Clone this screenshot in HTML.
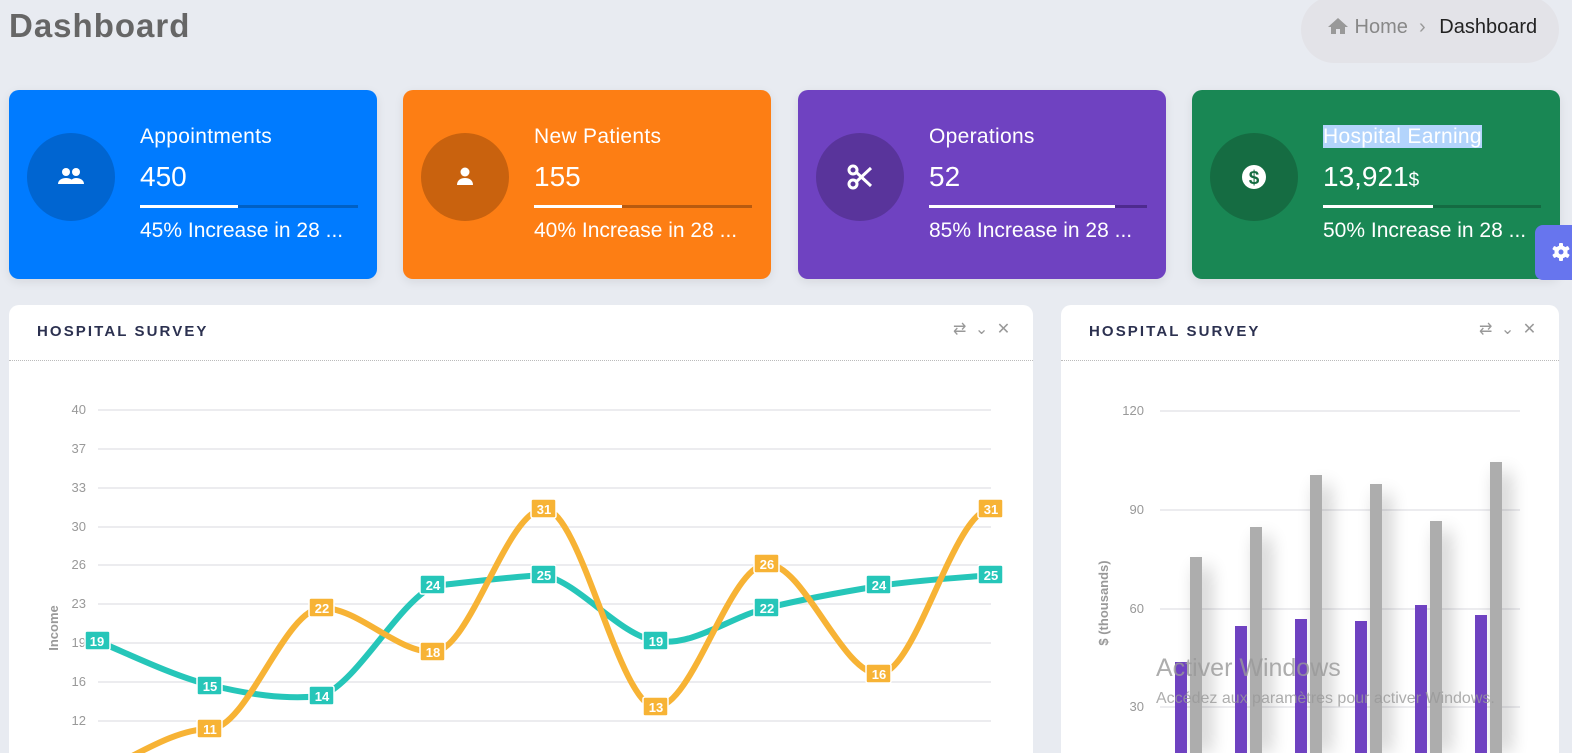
<!DOCTYPE html>
<html><head><meta charset="utf-8"><style>
*{margin:0;padding:0;box-sizing:border-box}
html,body{width:1572px;height:753px;overflow:hidden}
body{background:#e8ebf1;font-family:"Liberation Sans",sans-serif;position:relative}
h1{position:absolute;left:9px;top:7px;font-size:33px;font-weight:bold;color:#666;letter-spacing:1px}
.bc{position:absolute;left:1301px;top:-4px;width:258px;height:67px;border-radius:34px;background:#e3e3e8;font-size:20px;color:#888;padding:20px 0 0 26px;white-space:nowrap}
.bc b{font-weight:normal;color:#222;margin-left:8px}
.card{position:absolute;top:90px;width:368px;height:189px;border-radius:10px;color:#fff;box-shadow:0 3px 10px rgba(0,0,0,.08)}
.circ{position:absolute;left:18px;top:43px;width:88px;height:88px;border-radius:50%;display:flex;align-items:center;justify-content:center}
.t{position:absolute;left:131px;top:35px;font-size:21px;letter-spacing:0.3px;white-space:nowrap}
.v{position:absolute;left:131px;top:71px;font-size:28px}
.bar{position:absolute;left:131px;top:115px;width:218px;height:3px}
.bar i{display:block;height:3px;background:#fff}
.f{position:absolute;left:131px;top:129px;font-size:21px;white-space:nowrap}
.panel{position:absolute;top:305px;height:448px;background:#fff;border-radius:10px 10px 0 0}
.ph{height:56px;border-bottom:1px dotted #bbb;padding:18px 0 0 28px;font-size:15px;font-weight:bold;letter-spacing:2.1px;color:#2c3150}
.tools{position:absolute;top:14px;font-size:16px;color:#999;letter-spacing:2px}
.gear{position:absolute;left:1535px;top:225px;width:37px;height:55px;background:#6775ee;border-radius:8px 0 0 8px}
</style></head><body>
<h1>Dashboard</h1>
<div class="bc"><svg width="22" height="18" viewBox="0 0 22 18" style="vertical-align:-2px"><path d="M11 1 L1 10 H4 V17 H9 V12 H13 V17 H18 V10 H21 Z" fill="#999"/></svg> Home &nbsp;<span style="color:#999">&#8250;</span> <b>Dashboard</b></div>

<div class="card" style="left:9px;background:#007bff"><div class="circ" style="background:#0065d1"><svg width="30" height="22" viewBox="0 0 30 22"><circle cx="10" cy="6" r="4" fill="#fff"/><circle cx="20" cy="6" r="4" fill="#fff"/><path d="M2 18c0-4 4-6 8-6s8 2 8 6zM14 18c0-4 3-6 6-6 4 0 8 2 8 6z" fill="#fff"/></svg></div>
<div class="t">Appointments</div><div class="v">450</div><div class="bar" style="background:#0060c4"><i style="width:98px"></i></div><div class="f">45% Increase in 28 ...</div></div>

<div class="card" style="left:403px;background:#fd7e14"><div class="circ" style="background:#c9620e"><svg width="20" height="22" viewBox="0 0 20 22"><circle cx="10" cy="6" r="4.5" fill="#fff"/><path d="M2 19c0-5 4-7 8-7s8 2 8 7z" fill="#fff"/></svg></div>
<div class="t">New Patients</div><div class="v">155</div><div class="bar" style="background:#b85a0f"><i style="width:88px"></i></div><div class="f">40% Increase in 28 ...</div></div>

<div class="card" style="left:798px;background:#6f42c1"><div class="circ" style="background:#59349b"><svg width="28" height="28" viewBox="0 0 28 28" fill="none" stroke="#fff" stroke-width="3"><circle cx="7" cy="7" r="4"/><circle cx="7" cy="21" r="4"/><path d="M10 9 L25 23 M10 19 L25 5"/></svg></div>
<div class="t">Operations</div><div class="v">52</div><div class="bar" style="background:#4e2a8f"><i style="width:186px"></i></div><div class="f">85% Increase in 28 ...</div></div>

<div class="card" style="left:1192px;background:#198754"><div class="circ" style="background:#156c42"><svg width="26" height="26" viewBox="0 0 26 26"><circle cx="13" cy="13" r="12" fill="#fff"/><text x="13" y="20" text-anchor="middle" font-size="19" font-weight="bold" fill="#156c42" font-family="Liberation Sans">$</text></svg></div>
<div class="t"><span style="background:#b3d4fc;color:#fff">Hospital Earning</span></div><div class="v">13,921<span style="font-size:19px">$</span></div><div class="bar" style="background:#146b42"><i style="width:110px"></i></div><div class="f">50% Increase in 28 ...</div></div>

<div class="gear"><svg width="20" height="20" viewBox="0 0 20 20" style="position:absolute;left:16px;top:17px"><g fill="#fff"><rect x="8" y="1" width="4" height="18" rx="1"/><rect x="8" y="1" width="4" height="18" rx="1" transform="rotate(60 10 10)"/><rect x="8" y="1" width="4" height="18" rx="1" transform="rotate(120 10 10)"/><circle cx="10" cy="10" r="6.5"/></g><circle cx="10" cy="10" r="2.5" fill="#6775ee"/></svg></div>

<div class="panel" style="left:9px;width:1024px"><div class="ph">HOSPITAL SURVEY</div><div class="tools" style="left:944px">&#8644; &#8964; &#10005;</div></div>
<div class="panel" style="left:1061px;width:498px"><div class="ph">HOSPITAL SURVEY</div><div class="tools" style="left:418px">&#8644; &#8964; &#10005;</div></div>

<svg width="1572" height="753" style="position:absolute;left:0;top:0" font-family="Liberation Sans">
<g stroke="#e6e6ea" stroke-width="1.5">
<line x1="98" x2="991" y1="410" y2="410"/><line x1="98" x2="991" y1="449" y2="449"/><line x1="98" x2="991" y1="488" y2="488"/><line x1="98" x2="991" y1="527" y2="527"/><line x1="98" x2="991" y1="565" y2="565"/><line x1="98" x2="991" y1="604" y2="604"/><line x1="98" x2="991" y1="643" y2="643"/><line x1="98" x2="991" y1="682" y2="682"/><line x1="98" x2="991" y1="721" y2="721"/>
<line x1="1160" x2="1520" y1="411" y2="411"/><line x1="1160" x2="1520" y1="510" y2="510"/><line x1="1160" x2="1520" y1="609" y2="609"/><line x1="1160" x2="1520" y1="707" y2="707"/>
</g>
<g fill="#999" font-size="13" text-anchor="end">
<text x="86" y="414">40</text><text x="86" y="453">37</text><text x="86" y="492">33</text><text x="86" y="531">30</text><text x="86" y="569">26</text><text x="86" y="608">23</text><text x="86" y="647">19</text><text x="86" y="686">16</text><text x="86" y="725">12</text>
<text x="1144" y="415">120</text><text x="1144" y="514">90</text><text x="1144" y="613">60</text><text x="1144" y="711">30</text>
</g>
<text transform="translate(58,628) rotate(-90)" fill="#999" font-size="13" font-weight="bold" text-anchor="middle">Income</text>
<text transform="translate(1108,603) rotate(-90)" fill="#999" font-size="13" font-weight="bold" text-anchor="middle">$ (thousands)</text>

<path d="M97 641 C116 648 172 676 210 685 C247 694 284 700 322 696 C359 680 396 606 433 586 C470 582 507 577 544 575 C581 584 619 635 656 641 C693 647 730 617 767 608 C804 599 842 592 879 586 C916 580 972 577 991 575" fill="none" stroke="#26c6b9" stroke-width="6"/>
<path d="M97 773 C130 760 172 729 210 729 C247 729 285 608 322 608 C359 608 396 652 433 652 C470 652 507 509 544 509 C581 509 619 707 656 707 C693 707 730 564 767 564 C804 564 842 674 879 674 C916 674 954 509 991 509" fill="none" stroke="#f7b335" stroke-width="6"/>
<g font-size="13" font-weight="bold" fill="#fff" text-anchor="middle">
<g stroke="#fff" stroke-width="1.5">
<rect x="85" y="631" width="25" height="19" rx="2" fill="#26c6b9"/><rect x="197" y="676" width="25" height="19" rx="2" fill="#26c6b9"/><rect x="309" y="686" width="25" height="19" rx="2" fill="#26c6b9"/><rect x="420" y="575" width="25" height="19" rx="2" fill="#26c6b9"/><rect x="531" y="565" width="25" height="19" rx="2" fill="#26c6b9"/><rect x="643" y="631" width="25" height="19" rx="2" fill="#26c6b9"/><rect x="754" y="598" width="25" height="19" rx="2" fill="#26c6b9"/><rect x="866" y="575" width="25" height="19" rx="2" fill="#26c6b9"/><rect x="978" y="565" width="25" height="19" rx="2" fill="#26c6b9"/>
<rect x="197" y="719" width="25" height="19" rx="2" fill="#f7b335"/><rect x="309" y="598" width="25" height="19" rx="2" fill="#f7b335"/><rect x="420" y="642" width="25" height="19" rx="2" fill="#f7b335"/><rect x="531" y="499" width="25" height="19" rx="2" fill="#f7b335"/><rect x="643" y="697" width="25" height="19" rx="2" fill="#f7b335"/><rect x="754" y="554" width="25" height="19" rx="2" fill="#f7b335"/><rect x="866" y="664" width="25" height="19" rx="2" fill="#f7b335"/><rect x="978" y="499" width="25" height="19" rx="2" fill="#f7b335"/>
</g>
<text x="97" y="646">19</text><text x="210" y="691">15</text><text x="322" y="701">14</text><text x="433" y="590">24</text><text x="544" y="580">25</text><text x="656" y="646">19</text><text x="767" y="613">22</text><text x="879" y="590">24</text><text x="991" y="580">25</text>
<text x="210" y="734">11</text><text x="322" y="613">22</text><text x="433" y="657">18</text><text x="544" y="514">31</text><text x="656" y="712">13</text><text x="767" y="569">26</text><text x="879" y="679">16</text><text x="991" y="514">31</text>
</g>
<defs><filter id="sh" x="-2" y="-0.2" width="5" height="1.4"><feGaussianBlur stdDeviation="9"/></filter></defs>
<g fill="#000" opacity="0.22" filter="url(#sh)">
<rect x="1196" y="567" width="14" height="186"/><rect x="1256" y="537" width="14" height="216"/><rect x="1316" y="485" width="14" height="268"/><rect x="1376" y="494" width="14" height="259"/><rect x="1436" y="531" width="14" height="222"/><rect x="1496" y="472" width="14" height="281"/>
</g>
<g fill="#6f42c1"><rect x="1175" y="662" width="12" height="91"/><rect x="1235" y="626" width="12" height="127"/><rect x="1295" y="619" width="12" height="134"/><rect x="1355" y="621" width="12" height="132"/><rect x="1415" y="605" width="12" height="148"/><rect x="1475" y="615" width="12" height="138"/></g>
<g fill="#adadad"><rect x="1190" y="557" width="12" height="196"/><rect x="1250" y="527" width="12" height="226"/><rect x="1310" y="475" width="12" height="278"/><rect x="1370" y="484" width="12" height="269"/><rect x="1430" y="521" width="12" height="232"/><rect x="1490" y="462" width="12" height="291"/></g>
<text x="1156" y="676" fill="#999" fill-opacity="0.8" font-size="25">Activer Windows</text>
<text x="1156" y="703" fill="#999" fill-opacity="0.8" font-size="16">Accédez aux paramètres pour activer Windows.</text>
</svg>
</body></html>
